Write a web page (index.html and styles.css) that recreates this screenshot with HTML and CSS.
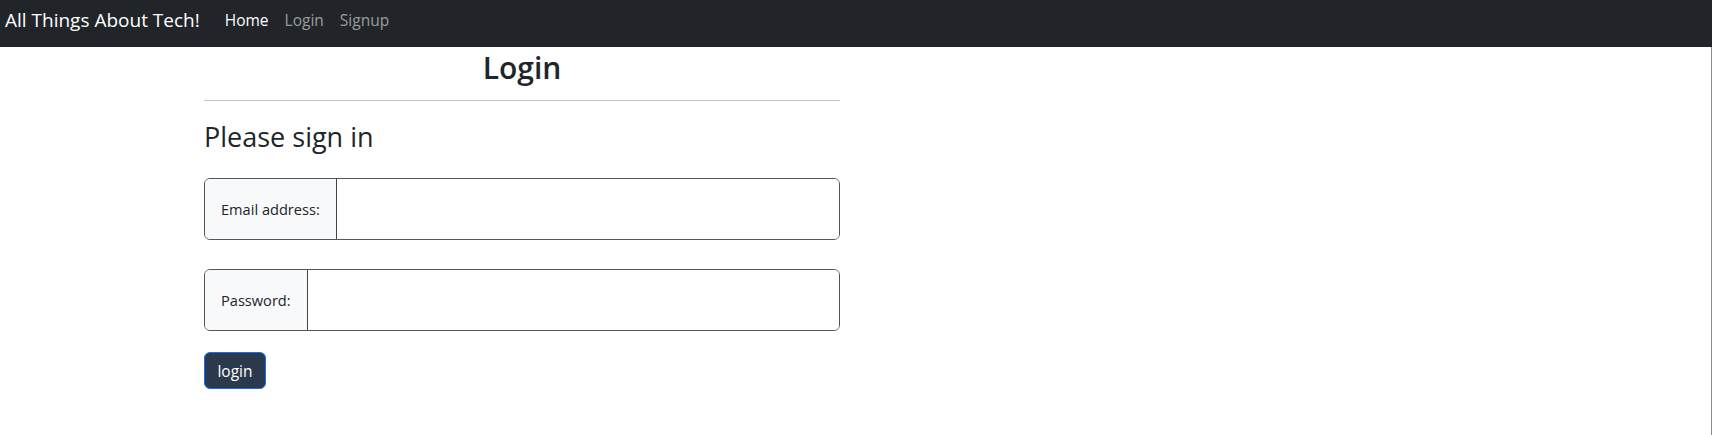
FILE: index.html
```html
<!DOCTYPE html>
<html lang="en">
<head>
<meta charset="utf-8">
<title>Login</title>
<link rel="stylesheet" href="styles.css">
</head>
<body>
<nav class="navbar">
  <a class="brand" href="#">All Things About Tech!</a>
  <ul class="nav-links">
    <li><a class="nav-link active" href="#">Home</a></li>
    <li><a class="nav-link" href="#">Login</a></li>
    <li><a class="nav-link" href="#">Signup</a></li>
  </ul>
</nav>
<main class="page">
  <div class="col">
    <h2 class="title">Login</h2>
    <hr class="rule">
    <h3 class="subtitle">Please sign in</h3>
    <form class="form">
      <div class="igroup">
        <label class="ilabel" for="email">Email address:</label>
        <input class="ifield" id="email" type="email">
      </div>
      <div class="igroup">
        <label class="ilabel" for="pw">Password:</label>
        <input class="ifield" id="pw" type="password">
      </div>
      <button class="btn" type="button">login</button>
    </form>
  </div>
</main>
</body>
</html>
```

FILE: styles.css
```css
* { box-sizing: border-box; }
html, body { margin: 0; padding: 0; }
body {
  font-family: "Open Sans", "Noto Sans", "Liberation Sans", sans-serif;
  color: #212529;
  background: #fff;
}
.navbar {
  height: 47px;
  background: #212529;
  display: flex;
  align-items: center;
  padding-left: 5px;
  padding-bottom: 6px;
}
.brand {
  font-size: 19px;
  color: #fff;
  text-decoration: none;
  margin-right: 17px;
  line-height: 1;
}
.nav-links {
  list-style: none;
  display: flex;
  margin: 0;
  padding: 0;
}
.nav-link {
  display: block;
  padding: 0 8px;
  font-size: 15.5px;
  color: rgba(255,255,255,0.55);
  text-decoration: none;
  line-height: 1;
}
.nav-link.active { color: #fff; }
.page {
  min-height: calc(100vh - 47px);
  border-right: 1px solid #8a8a8a;
}
.col {
  width: 636px;
  margin-left: 204px;
}
.title {
  margin: 0;
  padding-top: 1px;
  text-align: center;
  font-size: 30px;
  font-weight: 600;
  line-height: 40px;
}
.rule {
  margin: 12px 0 0 0;
  border: 0;
  border-top: 1px solid #c8c8c8;
}
.subtitle {
  margin: 16px 0 0 0;
  font-size: 27px;
  font-weight: 400;
  line-height: 40px;
}
.form {
  margin-top: 21px;
}
.igroup {
  display: flex;
  height: 62px;
  border: 1px solid #555;
  border-radius: 6px;
  overflow: hidden;
  margin-bottom: 29px;
}
.ilabel {
  display: flex;
  align-items: center;
  padding: 0 16px;
  background: #f8f9fa;
  border-right: 1px solid #444;
  font-size: 14.6px;
  color: #212529;
}
.ifield {
  flex: 1;
  border: 0;
  outline: none;
  font: inherit;
  padding: 0 12px;
}
.btn {
  display: block;
  margin-top: -8px;
  width: 62px;
  height: 37px;
  background: #2a3a4c;
  color: #fff;
  border: 1px solid #1a6cf0;
  border-radius: 6px;
  font-family: inherit;
  font-size: 15.5px;
  padding: 0;
}
```
